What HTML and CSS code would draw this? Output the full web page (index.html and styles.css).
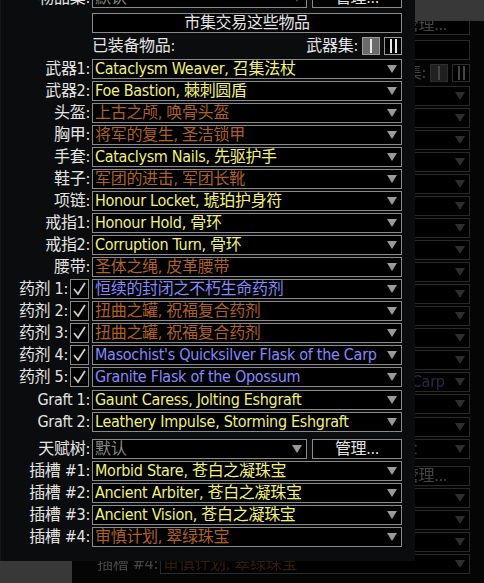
FILE: index.html
```html
<!DOCTYPE html>
<html lang="zh-CN">
<head>
    <meta charset="UTF-8">
    <meta name="viewport" content="width=device-width, initial-scale=1.0">
    <title>物品</title>
    <link rel="stylesheet" href="styles.css">
</head>
<body>
    <!-- Cửa sổ phía sau (bản sao mờ) -->
    <div class="window back" id="backWindow"></div>

    <!-- Cửa sổ phía trước -->
    <div class="window front" id="frontWindow">
        <div class="content">
            <div class="row">
                <span class="label">物品集:</span>
                <div class="field split">
                    <div class="select"><span class="value muted">默认</span><span class="arrow dim"></span></div>
                    <button class="btn">管理...</button>
                </div>
            </div>

            <div class="row trade-row">
                <span class="label"></span>
                <button class="btn wide">市集交易这些物品</button>
            </div>

            <div class="row header-row">
                <span class="label"></span>
                <div class="equipped">
                    <span>已装备物品:</span>
                    <span class="weapon-set">武器集:
                        <span class="set-btn active"><i></i></span>
                        <span class="set-btn"><i></i><i></i></span>
                    </span>
                </div>
            </div>

            <div class="row slots-start">
                <span class="label">武器1:</span>
                <div class="select"><span class="value rare">Cataclysm Weaver, 召集法杖</span><span class="arrow"></span></div>
            </div>
            <div class="row">
                <span class="label">武器2:</span>
                <div class="select"><span class="value rare">Foe Bastion, 棘刺圆盾</span><span class="arrow"></span></div>
            </div>
            <div class="row">
                <span class="label">头盔:</span>
                <div class="select"><span class="value unique">上古之颅, 唤骨头盔</span><span class="arrow"></span></div>
            </div>
            <div class="row">
                <span class="label">胸甲:</span>
                <div class="select"><span class="value unique">将军的复生, 圣洁锁甲</span><span class="arrow"></span></div>
            </div>
            <div class="row">
                <span class="label">手套:</span>
                <div class="select"><span class="value rare">Cataclysm Nails, 先驱护手</span><span class="arrow"></span></div>
            </div>
            <div class="row">
                <span class="label">鞋子:</span>
                <div class="select"><span class="value unique">军团的进击, 军团长靴</span><span class="arrow"></span></div>
            </div>
            <div class="row">
                <span class="label">项链:</span>
                <div class="select"><span class="value rare">Honour Locket, 琥珀护身符</span><span class="arrow"></span></div>
            </div>
            <div class="row">
                <span class="label">戒指1:</span>
                <div class="select"><span class="value rare">Honour Hold, 骨环</span><span class="arrow"></span></div>
            </div>
            <div class="row">
                <span class="label">戒指2:</span>
                <div class="select"><span class="value rare">Corruption Turn, 骨环</span><span class="arrow"></span></div>
            </div>
            <div class="row">
                <span class="label">腰带:</span>
                <div class="select"><span class="value unique">圣体之绳, 皮革腰带</span><span class="arrow"></span></div>
            </div>

            <div class="row">
                <span class="label flask">药剂 1:<span class="check"><svg viewBox="0 0 17 18"><polyline points="3,9 7,14 14,3"/></svg></span></span>
                <div class="select"><span class="value magic">恒续的封闭之不朽生命药剂</span><span class="arrow"></span></div>
            </div>
            <div class="row">
                <span class="label flask">药剂 2:<span class="check"><svg viewBox="0 0 17 18"><polyline points="3,9 7,14 14,3"/></svg></span></span>
                <div class="select"><span class="value unique">扭曲之罐, 祝福复合药剂</span><span class="arrow"></span></div>
            </div>
            <div class="row">
                <span class="label flask">药剂 3:<span class="check"><svg viewBox="0 0 17 18"><polyline points="3,9 7,14 14,3"/></svg></span></span>
                <div class="select"><span class="value unique">扭曲之罐, 祝福复合药剂</span><span class="arrow"></span></div>
            </div>
            <div class="row">
                <span class="label flask">药剂 4:<span class="check"><svg viewBox="0 0 17 18"><polyline points="3,9 7,14 14,3"/></svg></span></span>
                <div class="select"><span class="value magic">Masochist's Quicksilver Flask of the Carp</span><span class="arrow"></span></div>
            </div>
            <div class="row">
                <span class="label flask">药剂 5:<span class="check"><svg viewBox="0 0 17 18"><polyline points="3,9 7,14 14,3"/></svg></span></span>
                <div class="select"><span class="value magic">Granite Flask of the Opossum</span><span class="arrow"></span></div>
            </div>

            <div class="row graft-start">
                <span class="label">Graft 1:</span>
                <div class="select"><span class="value rare">Gaunt Caress, Jolting Eshgraft</span><span class="arrow"></span></div>
            </div>
            <div class="row">
                <span class="label">Graft 2:</span>
                <div class="select"><span class="value rare">Leathery Impulse, Storming Eshgraft</span><span class="arrow"></span></div>
            </div>

            <div class="row tree-row">
                <span class="label">天赋树:</span>
                <div class="field split">
                    <div class="select"><span class="value muted">默认</span><span class="arrow"></span></div>
                    <button class="btn">管理...</button>
                </div>
            </div>
            <div class="row">
                <span class="label">插槽 #1:</span>
                <div class="select"><span class="value rare">Morbid Stare, 苍白之凝珠宝</span><span class="arrow"></span></div>
            </div>
            <div class="row">
                <span class="label">插槽 #2:</span>
                <div class="select"><span class="value rare">Ancient Arbiter, 苍白之凝珠宝</span><span class="arrow"></span></div>
            </div>
            <div class="row">
                <span class="label">插槽 #3:</span>
                <div class="select"><span class="value rare">Ancient Vision, 苍白之凝珠宝</span><span class="arrow"></span></div>
            </div>
            <div class="row">
                <span class="label">插槽 #4:</span>
                <div class="select"><span class="value unique">审慎计划, 翠绿珠宝</span><span class="arrow"></span></div>
            </div>
        </div>
    </div>

    <script>
        // Cửa sổ phía sau là bản sao mờ của cửa sổ phía trước
        document.getElementById('backWindow').innerHTML = document.getElementById('frontWindow').innerHTML;
    </script>
</body>
</html>
```

FILE: styles.css
```css
* {
    box-sizing: border-box;
}

html, body {
    margin: 0;
    padding: 0;
}

body {
    width: 484px;
    height: 583px;
    position: relative;
    overflow: hidden;
    background-color: #383838;
    color: #e4e4e4;
    font-family: "DejaVu Sans Condensed", "DejaVu Sans", "Noto Sans CJK SC", sans-serif;
    font-size: 16px;
    letter-spacing: -0.3px;
}

.window {
    position: absolute;
    overflow: hidden;
}

.front {
    left: 0;
    top: 0;
    width: 415px;
    height: 561px;
    padding-left: 4px;
    background-color: #0b0c0e;
    border-left: 1px solid #17181a;
}

.back {
    left: 72px;
    top: 21px;
    width: 412px;
    height: 562px;
    background-color: #050505;
}

.front .content {
    margin-top: -12px;
    margin-left: -1px;
}

.back .content {
    margin-top: -6px;
    filter: brightness(0.3);
}

.content {
    display: flex;
    flex-direction: column;
    gap: 2px;
}

.row {
    display: grid;
    grid-template-columns: 86px 310px;
    column-gap: 2px;
    height: 20px;
    align-items: center;
}

.trade-row {
    margin-top: 3px;
}

.header-row {
    height: 18px;
    margin-top: 2px;
}

.slots-start {
    margin-top: 2px;
}

.graft-start {
    margin-top: 1px;
}

.tree-row {
    margin-top: 5px;
}

.label {
    text-align: right;
    white-space: nowrap;
    line-height: 20px;
}

.label.flask {
    display: flex;
    justify-content: flex-end;
    align-items: center;
    gap: 2px;
    padding-right: 1px;
}

.check {
    width: 19px;
    height: 20px;
    border: 1px solid #8a8a8a;
    background-color: #000;
    display: flex;
}

.check svg {
    width: 17px;
    height: 18px;
}

.check polyline {
    fill: none;
    stroke: #cfcfcf;
    stroke-width: 1.8;
}

.field.split {
    display: flex;
    gap: 5px;
    height: 20px;
}

.field.split .select {
    width: 215px;
}

.field.split .btn {
    flex: 1;
}

.select {
    position: relative;
    height: 20px;
    border: 1px solid #8a8a8a;
    background-color: #000;
    padding-left: 2px;
    line-height: 18px;
    white-space: nowrap;
    overflow: hidden;
}

.arrow {
    position: absolute;
    right: 4px;
    top: 5px;
    width: 0;
    height: 0;
    border-left: 5px solid transparent;
    border-right: 5px solid transparent;
    border-top: 8px solid #9a9a9a;
}

.arrow.dim {
    border-top-color: #4a4a4a;
}

.value.rare {
    color: #f2f27a;
}

.value.unique {
    color: #af6025;
}

.value.magic {
    color: #8888ff;
}

.value.muted {
    color: #8a8a8a;
}

.btn {
    height: 20px;
    padding: 0;
    border: 1px solid #8a8a8a;
    background-color: #000;
    color: #e4e4e4;
    font: inherit;
    letter-spacing: inherit;
    line-height: 18px;
    text-align: center;
}

.btn.wide {
    width: 310px;
}

.equipped {
    display: flex;
    justify-content: space-between;
    align-items: center;
    height: 18px;
    line-height: 18px;
}

.weapon-set {
    display: flex;
    align-items: center;
    gap: 3px;
}

.set-btn {
    width: 18px;
    height: 18px;
    border: 1px solid #9a9a9a;
    background-color: #000;
    display: flex;
    justify-content: center;
    gap: 3px;
    margin-left: 1px;
}

.set-btn.active {
    background-color: #6a6a6a;
}

.set-btn i {
    width: 2px;
    height: 14px;
    margin-top: 1px;
    background-color: #e8e8e8;
}
```
